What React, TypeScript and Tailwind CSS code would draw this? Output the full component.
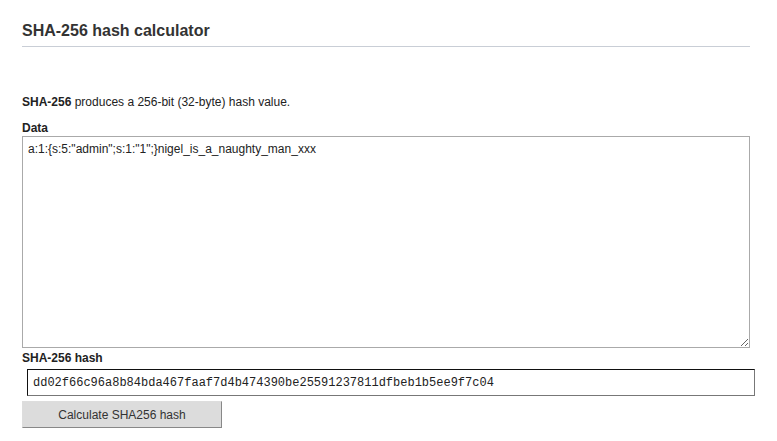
import React from "react";

export default function App() {
  return (
    <div className="min-h-[441px] bg-white px-[22px] pt-[21px] text-[#333]" style={{ fontFamily: '"Liberation Sans", Arial, sans-serif' }}>
      <div className="w-[728px]">
        <h1 className="text-[16px] font-bold leading-[19px] text-[#333]">SHA-256 hash calculator</h1>
        <div className="mt-[6px] h-px bg-[#c9ced6]" />
        <p className="mt-[48px] text-[12px] leading-[14px] text-[#222]">
          <b>SHA-256</b> produces a 256-bit (32-byte) hash value.
        </p>
        <div className="mt-[12px] text-[12px] font-bold leading-[14px] text-[#222]">Data</div>
        <textarea
          className="mt-[1px] block h-[212px] w-[728px] border border-[#aaa] px-[5px] py-[5px] text-[12px] leading-[14px] text-[#222] outline-none"
          style={{ fontFamily: '"Liberation Sans", Arial, sans-serif' }}
          defaultValue={'a:1:{s:5:"admin";s:1:"1";}nigel_is_a_naughty_man_xxx'}
        />
        <div className="mt-[3px] text-[12px] font-bold leading-[14px] text-[#222]">SHA-256 hash</div>
        <input
          className="ml-[5px] mt-[4px] block h-[27px] w-[728px] border border-[#777] border-t-[#111] border-l-[#111] px-[5px] text-[12px] text-[#222] outline-none"
          style={{ fontFamily: '"Liberation Mono", "Courier New", monospace' }}
          defaultValue="dd02f66c96a8b84bda467faaf7d4b474390be25591237811dfbeb1b5ee9f7c04"
          readOnly
        />
        <button
          className="mt-[5px] block h-[27px] w-[200px] border border-[#ddd] border-b-[#888] border-r-[#888] bg-[#dcdcdc] text-[12px] text-[#333]"
          style={{ fontFamily: '"Liberation Sans", Arial, sans-serif' }}
        >
          Calculate SHA256 hash
        </button>
      </div>
    </div>
  );
}
